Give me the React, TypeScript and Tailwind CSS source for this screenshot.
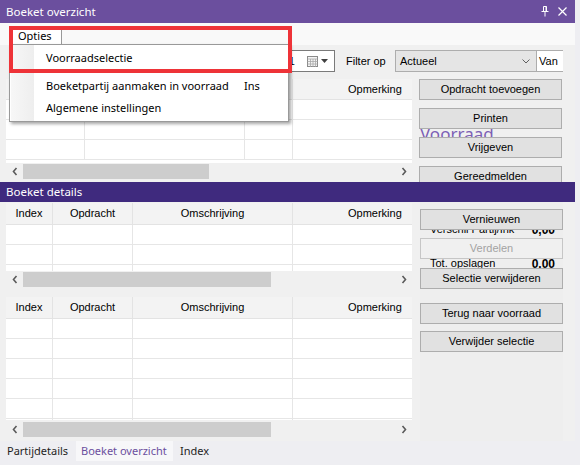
import React from 'react';

const seg = "font-['Noto_Sans',sans-serif]";
const ms = "font-['Liberation_Sans',Arial,sans-serif]";

type Col = { cls: string; label?: string; lcls?: string };

function ChevL() {
  return (
    <svg width="6" height="9" viewBox="0 0 6 9" className="shrink-0">
      <path d="M4.5 1 L1.5 4.5 L4.5 8" fill="none" stroke="#5a5a5a" strokeWidth="1.6" />
    </svg>
  );
}

function ChevR() {
  return (
    <svg width="6" height="9" viewBox="0 0 6 9" className="shrink-0">
      <path d="M1.5 1 L4.5 4.5 L1.5 8" fill="none" stroke="#5a5a5a" strokeWidth="1.6" />
    </svg>
  );
}

function ScrollBar({ thumb }: { thumb: string }) {
  return (
    <div className="h-[17px] flex items-center bg-[#f0f0f0]">
      <div className="w-[17px] flex justify-center">
        <ChevL />
      </div>
      <div className={`${thumb} h-[15px] bg-[#cdcdcd]`} />
      <div className="flex-1" />
      <div className="w-[17px] flex justify-center">
        <ChevR />
      </div>
    </div>
  );
}

function Grid({ cols, rows, body, head }: { cols: Col[]; rows: number; body: string; head: string }) {
  return (
    <div className={`${body} overflow-hidden bg-white`}>
      <div className={`${head} flex bg-[#f3f3f3] border-b border-[#e3e3e3]`}>
        {cols.map((c, i) => (
          <div key={i} className={`${c.cls} shrink-0 border-r border-[#e3e3e3] flex items-center ${ms} text-[11px] text-black ${c.lcls ?? ''}`}>
            {c.label}
          </div>
        ))}
      </div>
      {Array.from({ length: rows }).map((_, r) => (
        <div key={r} className="h-[20px] flex border-b border-[#e6e6e6]">
          {cols.map((c, i) => (
            <div key={i} className={`${c.cls} shrink-0 border-r border-[#e6e6e6]`} />
          ))}
        </div>
      ))}
    </div>
  );
}

function Btn({ label, cls = '', disabled = false }: { label: string; cls?: string; disabled?: boolean }) {
  return (
    <div
      className={`relative z-10 h-[21px] w-[143px] flex items-center justify-center border ${ms} text-[11px] ${
        disabled ? 'bg-[#f0f0f0] border-[#c6c6c6] text-[#a3a3a3]' : 'bg-[#e1e1e1] border-[#adadad] text-black'
      } ${cls}`}
    >
      {label}
    </div>
  );
}

const detailCols: Col[] = [
  { cls: 'w-[47px]', label: 'Index', lcls: 'justify-center' },
  { cls: 'w-[80px]', label: 'Opdracht', lcls: 'justify-center' },
  { cls: 'w-[160px]', label: 'Omschrijving', lcls: 'justify-center' },
  { cls: 'w-[130px]', label: 'Opmerking', lcls: 'pl-[55px]' },
];

const topCols: Col[] = [
  { cls: 'w-[79px]' },
  { cls: 'w-[160px]' },
  { cls: 'w-[48px]' },
  { cls: 'w-[130px]', label: 'Opmerking', lcls: 'pl-[55px]' },
];

export default function App() {
  return (
    <div className="relative w-[580px] h-[465px] overflow-hidden bg-[#eeeef2]">
      <div className="w-[575px] h-[441px] flex flex-col bg-[#f0f0f0]">
        {/* title */}
        <div className="h-[23px] shrink-0 bg-[#6b4f9e] flex items-center justify-between pl-[6px] pr-[8px]">
          <span className={`${seg} text-[11.5px] text-white`}>Boeket overzicht</span>
          <div className="flex items-center gap-[9px]">
            <svg width="8" height="11" viewBox="0 0 8 11">
              <path d="M2.5 0.5h3v5h-3z M5 0.5v5 M0.5 5.5h7 M4 5.5v5" fill="none" stroke="white" strokeWidth="1" />
            </svg>
            <svg width="9" height="9" viewBox="0 0 9 9">
              <path d="M0.5 0.5 L8.5 8.5 M8.5 0.5 L0.5 8.5" stroke="white" strokeWidth="1.2" />
            </svg>
          </div>
        </div>

        {/* top part */}
        <div className="h-[159px] shrink-0 overflow-hidden flex flex-col">
          <div className="h-[22px] shrink-0 bg-[#f9f9f9]" />
          <div className="mt-[5px] h-[22px] flex shrink-0">
            <div className="ml-[200px] w-[135px] bg-white border border-[#7a7a7a] flex items-center justify-end pr-[6px] gap-[3px]">
              <span className={`${ms} text-[11px] mr-[9px]`}>01-01-2021</span>
              <svg width="11" height="11" viewBox="0 0 11 11">
                <rect x="0.5" y="0.5" width="10" height="10" fill="#f4f4f4" stroke="#8a8a8a" />
                <path d="M0.5 3h10 M0.5 5.5h10 M0.5 8h10 M3.5 3v8 M6 3v8 M8.5 3v8" stroke="#a8a8a8" strokeWidth="0.8" />
              </svg>
              <svg width="7" height="4" viewBox="0 0 7 4">
                <path d="M0 0h7L3.5 4z" fill="#404040" />
              </svg>
            </div>
            <div className={`w-[60px] pl-[11px] flex items-center ${ms} text-[11px] text-black`}>Filter op</div>
            <div className="w-[142px] bg-[#e5e5e5] border border-[#adadad] flex items-center justify-between pl-[4px] pr-[6px]">
              <span className={`${ms} text-[11px] text-black`}>Actueel</span>
              <svg width="8" height="5" viewBox="0 0 8 5">
                <path d="M0.5 0.5 L4 4 L7.5 0.5" fill="none" stroke="#606060" strokeWidth="1" />
              </svg>
            </div>
            <div className={`w-[26px] bg-white border-y border-[#adadad] overflow-hidden flex items-center pl-[2px] ${ms} text-[11px] text-black`}>
              Van
            </div>
          </div>
          <div className="mt-[7px] flex">
            <div className="w-[412px] pl-[6px] flex flex-col">
              <Grid cols={topCols} rows={3} body="h-[84px]" head="h-[21px]" />
              <ScrollBar thumb="w-[186px]" />
            </div>
            <div className="relative ml-[7px] w-[143px] flex flex-col gap-[8px]">
              <span className={`absolute left-[1px] top-[46px] leading-none ${seg} text-[17px] text-[#7c5fb5]`}>Voorraad</span>
              <Btn label="Opdracht toevoegen" />
              <Btn label="Printen" />
              <Btn label="Vrijgeven" />
              <Btn label="Gereedmelden" />
            </div>
          </div>
        </div>

        {/* details bar */}
        <div className="h-[20px] shrink-0 bg-[#3f2a7e] flex items-center pl-[6px]">
          <span className={`${seg} text-[11.5px] text-white`}>Boeket details</span>
        </div>

        {/* lower part */}
        <div className="flex flex-1">
          <div className="w-[412px] pl-[6px] pt-[1px] flex flex-col">
            <Grid cols={detailCols} rows={3} body="h-[68px]" head="h-[22px]" />
            <ScrollBar thumb="w-[248px]" />
            <div className="mt-[9px]">
              <Grid cols={detailCols} rows={6} body="h-[123px]" head="h-[22px]" />
            </div>
            <div className="mt-[1px]">
              <ScrollBar thumb="w-[248px]" />
            </div>
          </div>
          <div className="relative ml-[8px] w-[143px] flex flex-col bg-[#eeeeee]">
            <div className={`absolute left-[10px] top-[22px] w-[125px] flex justify-between leading-none ${ms} text-[11px] text-black`}>
              <span>Verschil Partij/Ink</span>
              <span className="font-bold text-[12px]">0,00</span>
            </div>
            <div className={`absolute left-[10px] top-[56px] w-[125px] flex justify-between leading-none ${ms} text-[11px] text-black`}>
              <span>Tot. opslagen</span>
              <span className="font-bold text-[12px]">0.00</span>
            </div>
            <Btn label="Vernieuwen" cls="mt-[7px]" />
            <Btn label="Verdelen" disabled cls="mt-[8px]" />
            <Btn label="Selectie verwijderen" cls="mt-[9px]" />
            <Btn label="Terug naar voorraad" cls="mt-[14px]" />
            <Btn label="Verwijder selectie" cls="mt-[7px]" />
          </div>
        </div>
      </div>

      {/* tabs */}
      <div className={`h-[20px] flex ${seg} text-[11px]`}>
        <div className="pl-[7px] w-[76px] flex items-center text-[#1e1e1e]">Partijdetails</div>
        <div className="w-[97px] bg-[#f7f7f9] flex items-center pl-[5px] text-[#6b4f9e]">Boeket overzicht</div>
        <div className="pl-[7px] flex items-center text-[#1e1e1e]">Index</div>
      </div>

      {/* dropdown menu */}
      <div className="absolute left-[9px] top-[27px] w-[280px] flex flex-col">
        <div className="w-[53px] h-[18px] bg-white border-x border-t border-[#999999] flex items-center pl-[8px]">
          <span className={`${seg} text-[11px] text-black`}>Opties</span>
        </div>
        <div className="-mt-px bg-white border border-[#999999] shadow-[2px_2px_3px_rgba(0,0,0,0.35)] flex">
          <div className="w-[23px] ml-[1px] bg-gradient-to-r from-[#f7f7f7] to-[#eeeeee]" />
          <div className={`flex-1 flex flex-col py-[2px] ${seg} text-[11px] text-black`}>
            <div className="h-[22px] flex items-center pl-[12px]">Voorraadselectie</div>
            <div className="h-[6px]" />
            <div className="h-[22px] flex items-center pl-[12px]">
              <span className="w-[198px]">Boeketpartij aanmaken in voorraad</span>
              <span>Ins</span>
            </div>
            <div className="h-[22px] flex items-center pl-[12px]">Algemene instellingen</div>
          </div>
        </div>
      </div>

      {/* highlight box */}
      <div className="absolute left-[9px] top-[26px] w-[283px] h-[47px] border-4 border-[#ee3338]" />
    </div>
  );
}
